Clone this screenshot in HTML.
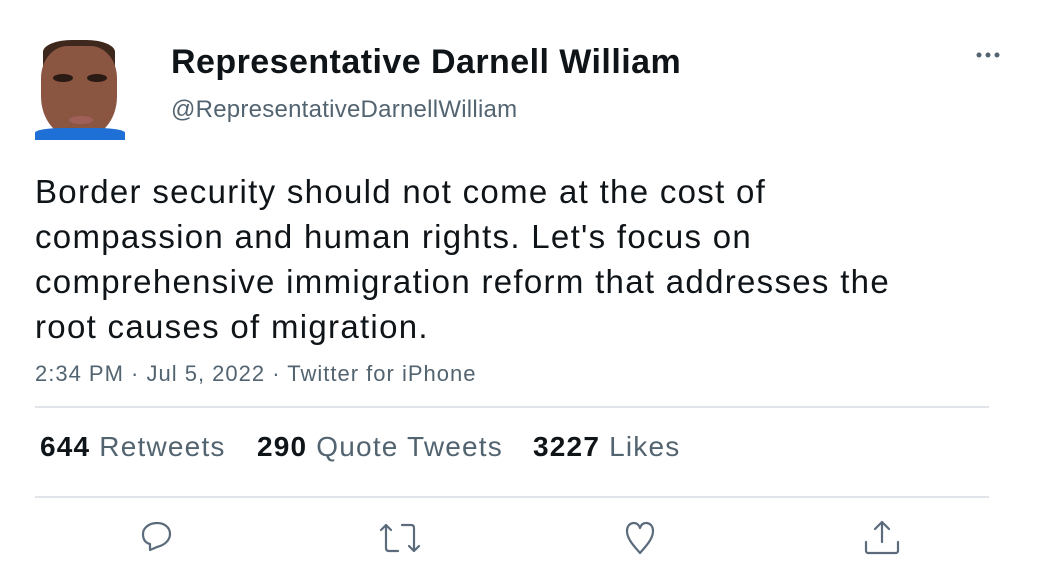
<!DOCTYPE html>
<html><head><style>
body{margin:0;width:1050px;height:570px;background:#fff;font-family:"Liberation Sans",Arial,sans-serif;position:relative;overflow:hidden}
.a{position:absolute;white-space:nowrap}
.av{left:35px;top:40px;width:96px;height:100px;background:#fff;overflow:hidden}
.name{left:171px;top:43px;font-size:34px;font-weight:bold;color:#0f1419;letter-spacing:0.45px}
.handle{left:171px;top:96px;font-size:24px;color:#536471;letter-spacing:0.25px}
.body{left:35px;top:169px;font-size:33px;line-height:45px;color:#0f1419;letter-spacing:1.3px}
.ts{left:35px;top:361px;font-size:22px;color:#536471;letter-spacing:1px}
.hr{left:35px;width:954px;height:2px;background:#e1e4e8}
.st{top:431px;font-size:28px;color:#536471;letter-spacing:1.2px}
.st b{color:#0f1419}
svg{position:absolute}
</style></head><body>
<div class="a av">
<div class="a" style="left:8px;top:0;width:72px;height:30px;background:#3e271d;border-radius:40% 40% 0 0"></div>
<div class="a" style="left:6px;top:6px;width:76px;height:92px;background:#8a5642;border-radius:35% 35% 45% 45%"></div>
<div class="a" style="left:18px;top:34px;width:20px;height:8px;background:#2a1a14;border-radius:50%"></div>
<div class="a" style="left:52px;top:34px;width:20px;height:8px;background:#2a1a14;border-radius:50%"></div>
<div class="a" style="left:34px;top:76px;width:24px;height:8px;background:#a0605a;border-radius:50%"></div>
<div class="a" style="left:0;top:88px;width:90px;height:16px;background:#1e6fd6;border-radius:30% 30% 0 0"></div>
</div>
<div class="a name">Representative Darnell William</div>
<div class="a handle">@RepresentativeDarnellWilliam</div>
<svg style="left:975px;top:50px" width="28" height="10"><circle cx="4" cy="5" r="2.5" fill="#536471"/><circle cx="13" cy="5" r="2.5" fill="#536471"/><circle cx="22" cy="5" r="2.5" fill="#536471"/></svg>
<div class="a body">Border security should not come at the cost of<br>compassion and human rights. Let's focus on<br>comprehensive immigration reform that addresses the<br>root causes of migration.</div>
<div class="a ts">2:34 PM · Jul 5, 2022 · Twitter for iPhone</div>
<div class="a hr" style="top:406px"></div>
<div class="a st" style="left:40px"><b>644</b> Retweets</div>
<div class="a st" style="left:257px"><b>290</b> Quote Tweets</div>
<div class="a st" style="left:533px"><b>3227</b> Likes</div>
<div class="a hr" style="top:496px"></div>
<svg style="left:135px;top:520px" width="40" height="40" fill="none" stroke="#5b6b7c" stroke-width="2.2" stroke-linejoin="round" stroke-linecap="round"><path d="M22 27 C30 25 35 20 35 14 C35 7 29 3 22 3 C14 3 8 8 8 14 C8 20 11 23 15 24 L15 30 Z"/></svg>
<svg style="left:378px;top:520px" width="45" height="40" fill="none" stroke="#5b6b7c" stroke-width="2.2" stroke-linejoin="round" stroke-linecap="round"><path d="M3 10 L8 5 L13 10 M8 5 V28 C8 30 9 31 11 31 H20"/><path d="M41 26 L36 31 L31 26 M36 31 V8 C36 6 35 5 33 5 H24"/></svg>
<svg style="left:620px;top:520px" width="40" height="40" fill="none" stroke="#5b6b7c" stroke-width="2.2" stroke-linejoin="round"><path d="M20 33 C12 24 7 18 7 11 C7 6 10 3 14 3 C17 3 19 5 20 8 C21 5 23 3 26 3 C30 3 33 6 33 11 C33 18 28 24 20 33 Z"/></svg>
<svg style="left:862px;top:518px" width="40" height="40" fill="none" stroke="#5b6b7c" stroke-width="2.2" stroke-linejoin="round" stroke-linecap="round"><path d="M20 4 V24 M13 11 L20 4 L27 11"/><path d="M4 24 V33 C4 34 5 35 6 35 H34 C35 35 36 34 36 33 V24"/></svg>
</body></html>
